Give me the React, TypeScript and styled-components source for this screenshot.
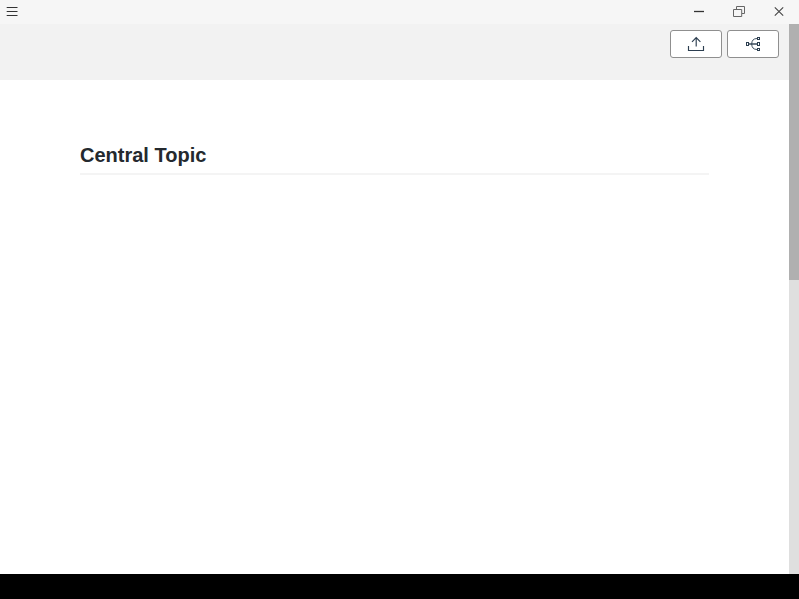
import React from "react";
import styled, { createGlobalStyle } from "styled-components";

const GlobalStyle = createGlobalStyle`
  * { box-sizing: border-box; }
  html, body { margin: 0; padding: 0; overflow: hidden; background: #000; }
  body { font-family: "Liberation Sans", Arial, sans-serif; }
`;

const Desktop = styled.div`
  display: flex;
  flex-direction: column;
  width: 100vw;
  height: 100vh;
  padding-bottom: 25px;
  background: #000;
`;

const TitleBar = styled.header`
  display: flex;
  flex: 0 0 24px;
  justify-content: space-between;
  background: #f6f6f6;
`;

const WindowControls = styled.div`
  display: flex;
`;

const TitleButton = styled.button<{ $width: number }>`
  width: ${({ $width }) => $width}px;
  height: 24px;
  padding: 0;
  border: 0;
  background: transparent;

  svg { display: block; width: 100%; height: 100%; }
`;

const Body = styled.div`
  display: flex;
  flex: 1;
  min-height: 0;
`;

const Main = styled.main`
  display: flex;
  flex: 1;
  flex-direction: column;
  background: #fff;
`;

const Toolbar = styled.div`
  display: flex;
  flex: 0 0 56px;
  justify-content: flex-end;
  align-items: flex-start;
  gap: 5px;
  padding: 6px 10px;
  background: #f2f2f2;
`;

const ToolButton = styled.button`
  width: 52px;
  height: 28px;
  padding: 0;
  border: 1px solid #8f8f8f;
  border-radius: 3px;
  background: #fff;

  svg { display: block; }
`;

const Outline = styled.article`
  padding: 60px 80px 0;
`;

const Title = styled.h1`
  height: 35px;
  margin: 0;
  border-bottom: 2px solid #f4f4f4;
  color: #24292e;
  font-size: 20px;
  font-weight: 700;
  line-height: 30px;
`;

const ScrollTrack = styled.div`
  flex: 0 0 10px;
  background: #dfdfdf;
`;

const ScrollThumb = styled.div`
  height: 256px;
  background: #b0b0b0;
`;

const MenuIcon = () => (
  <svg viewBox="0 0 24 24" fill="none" stroke="#333" strokeWidth="1">
    <path d="M6.7 7.5H17.5M6.7 11.5H17.5M6.7 15.5H17.5" />
  </svg>
);

const MinimizeIcon = () => (
  <svg viewBox="0 0 40 24" fill="none" stroke="#333" strokeWidth="1.3">
    <path d="M15 11.5H25" />
  </svg>
);

const RestoreIcon = () => (
  <svg viewBox="0 0 40 24" fill="none" stroke="#666" strokeWidth="1">
    <path d="M17.5 9.5V6.5H25.5V13.5H23" />
    <path d="M14.5 9.5H22.7V16.5H14.5Z" />
  </svg>
);

const CloseIcon = () => (
  <svg viewBox="0 0 40 24" fill="none" stroke="#444" strokeWidth="1.1">
    <path d="M15.8 7.3L24.2 15.7M24.2 7.3L15.8 15.7" />
  </svg>
);

const ExportIcon = () => (
  <svg width="50" height="26" viewBox="0 0 50 26" fill="none" stroke="#2c3e50" strokeWidth="1.15">
    <path d="M17.5 15V19.5H32.5V15M25.2 15.5V6.6M21 10.8L25.2 6.6L29.4 10.8" />
  </svg>
);

const MindMapIcon = () => (
  <svg width="50" height="26" viewBox="0 0 50 26" fill="none" stroke="#2c3e50" strokeWidth="1">
    <path d="M20.5 13H29" strokeWidth="1.4" />
    <path d="M29 7.5C25.5 7.5 23.7 9.5 23.7 13C23.7 16.5 25.5 18.5 29 18.5" strokeWidth="0.9" />
    <g fill="#fff">
      <rect x="18.5" y="11.5" width="2" height="3" />
      <rect x="29.5" y="6.5" width="2" height="2" />
      <rect x="29.5" y="11.5" width="2" height="3" />
      <rect x="29.5" y="17.5" width="2" height="2" />
    </g>
  </svg>
);

export default function App() {
  return (
    <Desktop>
      <GlobalStyle />
      <TitleBar>
        <TitleButton $width={24} aria-label="Menu"><MenuIcon /></TitleButton>
        <WindowControls>
          <TitleButton $width={40} aria-label="Minimize"><MinimizeIcon /></TitleButton>
          <TitleButton $width={40} aria-label="Restore"><RestoreIcon /></TitleButton>
          <TitleButton $width={40} aria-label="Close"><CloseIcon /></TitleButton>
        </WindowControls>
      </TitleBar>
      <Body>
        <Main>
          <Toolbar>
            <ToolButton aria-label="Export"><ExportIcon /></ToolButton>
            <ToolButton aria-label="Mind map"><MindMapIcon /></ToolButton>
          </Toolbar>
          <Outline>
            <Title>Central Topic</Title>
          </Outline>
        </Main>
        <ScrollTrack>
          <ScrollThumb />
        </ScrollTrack>
      </Body>
    </Desktop>
  );
}
